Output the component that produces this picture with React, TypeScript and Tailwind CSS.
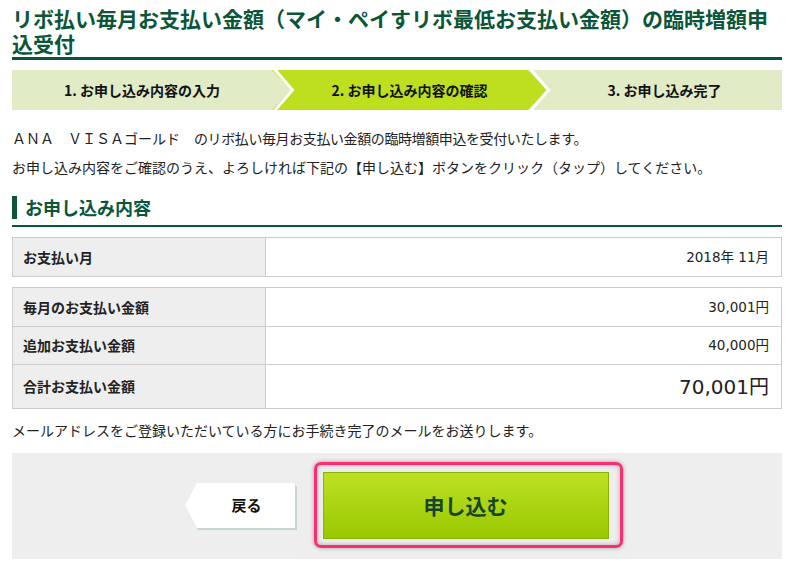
import React from "react";

const Chevron = ({ color }: { color: string }) => (
  <svg
    className="absolute left-full top-0 z-10 overflow-visible"
    width="22"
    height="40"
    viewBox="0 0 22 40"
  >
    <polygon points="0,0 19,20 0,40" fill={color} />
    <polyline points="1.5,-2 20.5,20 1.5,42" fill="none" stroke="#ffffff" strokeWidth="3" />
  </svg>
);

const Row = ({
  label,
  value,
  big,
  first,
}: {
  label: string;
  value: string;
  big?: boolean;
  first?: boolean;
}) => (
  <div className={`flex ${big ? "h-[44px]" : "h-[38px]"} ${first ? "" : "border-t border-[#cccccc]"}`}>
    <div className="flex w-[253px] items-center border-r border-[#cccccc] bg-[#eeeeee] pl-[10px] text-[14px] font-bold text-[#222]">
      {label}
    </div>
    <div
      className={`flex flex-1 items-center justify-end pr-[12px] font-['DejaVu_Sans','Noto_Sans_CJK_JP',sans-serif] text-[#222] ${
        big ? "text-[20px]" : "text-[13.5px]"
      }`}
    >
      {value}
    </div>
  </div>
);

export default function App() {
  return (
    <div className="min-h-[568px] w-[792px] bg-white pl-[12px] pr-[10px] font-['Noto_Sans_CJK_JP','Noto_Sans',sans-serif] text-[#222]">
      <h1 className="border-b-[3px] border-[#0b5638] pb-[1px] pt-[6px] text-[21px] font-bold leading-[25px] text-[#0b5638]">
        リボ払い毎月お支払い金額（マイ・ペイすリボ最低お支払い金額）の臨時増額申込受付
      </h1>

      <div className="mt-[10px] flex h-10 text-[14px] font-bold text-[#111]">
        <div className="relative flex w-[260px] items-center justify-center bg-[#e1ebc6]">
          1. お申し込み内容の入力
          <Chevron color="#e1ebc6" />
        </div>
        <div className="relative flex w-[256px] items-center justify-center bg-[#bedf1f] pl-[19px]">
          2. お申し込み内容の確認
          <Chevron color="#bedf1f" />
        </div>
        <div className="flex flex-1 items-center justify-center bg-[#e1ebc6] pl-[19px]">
          3. お申し込み完了
        </div>
      </div>

      <div className="mt-[14px] text-[14px] leading-[29px]">
        <p>
          {"ＡＮＡ　ＶＩＳＡゴールド　"}
          <span className="tracking-[-0.4px]">のリボ払い毎月お支払い金額の臨時増額申込を受付いたします。</span>
        </p>
        <p>お申し込み内容をご確認のうえ、よろしければ下記の【申し込む】ボタンをクリック（タップ）してください。</p>
      </div>

      <div className="mt-[14px] border-b-2 border-[#0b5638] pb-[6px]">
        <div className="flex h-[23px] items-center border-l-[5px] border-[#0b5638] pl-[8px] text-[18px] font-bold text-[#0b5638]">
          お申し込み内容
        </div>
      </div>

      <div className="mt-[10px] border border-[#cccccc]">
        <Row first label="お支払い月" value="2018年 11月" />
      </div>

      <div className="mt-[10px] border border-[#cccccc]">
        <Row first label="毎月のお支払い金額" value="30,001円" />
        <Row label="追加お支払い金額" value="40,000円" />
        <Row big label="合計お支払い金額" value="70,001円" />
      </div>

      <p className="mt-[10px] text-[14px] leading-[22px]">
        メールアドレスをご登録いただいている方にお手続き完了のメールをお送りします。
      </p>

      <div className="mt-[12px] flex h-[106px] items-start justify-center gap-[17px] bg-[#eeeeee] pl-[13px] pt-[9px]">
        <div className="relative mt-[21px] flex h-[47px] w-[112px] items-center justify-center pb-[2px] pl-[12px]">
          <svg className="absolute left-0 top-0" width="112" height="47" viewBox="0 0 112 47">
            <polygon points="13,2 110,2 112,4 112,47 13,47 1,24" fill="#c6d3d3" />
            <polygon points="12,0 108,0 110,2 110,45 12,45 0,22.5" fill="#ffffff" />
          </svg>
          <span className="relative text-[15px] font-bold text-[#111]">戻る</span>
        </div>

        <div className="rounded-[7px] border-[3px] border-[#ff2d6f] pb-[6px] pl-[6px] pr-[11px] pt-[7px] shadow-[0_0_4px_rgba(0,0,0,0.35),inset_0_0_4px_rgba(0,0,0,0.3)]">
          <div className="flex h-[67px] w-[286px] items-center justify-center border border-[#8cb300] bg-[linear-gradient(#bee024,#98c800)] text-[21px] font-bold text-[#17452a]">
            申し込む
          </div>
        </div>
      </div>
    </div>
  );
}
